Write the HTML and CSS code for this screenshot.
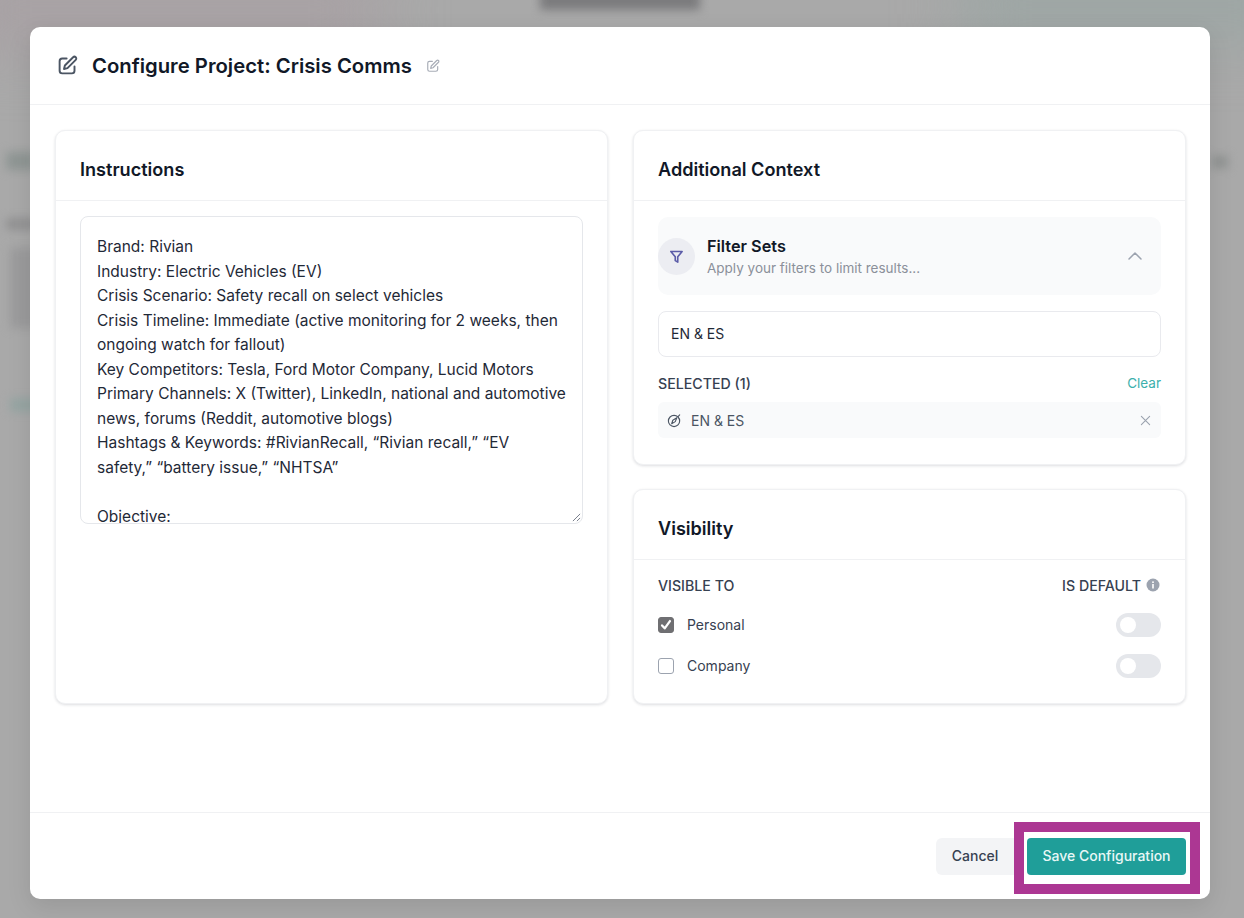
FILE: index.html
```html
<!DOCTYPE html>
<html lang="en">
<head>
<meta charset="utf-8">
<title>Configure Project</title>
<link rel="stylesheet" href="styles.css">
</head>
<body>
<div class="backdrop">
  <div class="blur blur-pink"></div>
  <div class="blur blur-teal"></div>
  <div class="blur blur-title"></div>
  <div class="blur blur-l1"></div>
  <div class="blur blur-l2"></div>
  <div class="blur blur-l3"></div>
  <div class="blur blur-l4"></div>
  <div class="blur blur-r1"></div>
</div>
<main class="modal">
  <header class="modal-head">
    <svg class="head-icon" viewBox="0 0 24 24" fill="none" stroke="currentColor" stroke-width="2.200" stroke-linecap="round" stroke-linejoin="round"><path d="M11 4H6a3 3 0 0 0-3 3v11a3 3 0 0 0 3 3h11a3 3 0 0 0 3-3v-5"/><path d="M18.400 2.600a2.100 2.100 0 0 1 3 3L12 15l-4 1 1-4z"/></svg>
    <h1 class="modal-title">Configure Project: Crisis Comms</h1>
    <svg class="title-edit" viewBox="0 0 24 24" fill="none" stroke="currentColor" stroke-width="2" stroke-linecap="round" stroke-linejoin="round"><path d="M11 4H6a3 3 0 0 0-3 3v11a3 3 0 0 0 3 3h11a3 3 0 0 0 3-3v-5"/><path d="M18.400 2.600a2.100 2.100 0 0 1 3 3L12 15l-4 1 1-4z"/></svg>
  </header>
  <div class="modal-body">
    <section class="card card-instructions">
      <h2 class="card-title">Instructions</h2>
      <div class="card-content">
        <div class="textarea">
          <p>Brand: Rivian</p>
          <p>Industry: Electric Vehicles (EV)</p>
          <p>Crisis Scenario: Safety recall on select vehicles</p>
          <p>Crisis Timeline: Immediate (active monitoring for 2 weeks, then ongoing watch for fallout)</p>
          <p>Key Competitors: Tesla, Ford Motor Company, Lucid Motors</p>
          <p>Primary Channels: X (Twitter), LinkedIn, national and automotive news, forums (Reddit, automotive blogs)</p>
          <p>Hashtags &amp; Keywords: #RivianRecall, “Rivian recall,” “EV<br>safety,” “battery issue,” “NHTSA”</p>
          <p class="blank">&nbsp;</p>
          <p>Objective:</p>
          <svg class="resize" viewBox="0 0 10 10" fill="none" stroke="#6b7280" stroke-width="1"><path d="M1 9 9 1M5.500 9 9 5.500"/></svg>
        </div>
      </div>
    </section>
    <div class="side">
      <section class="card">
        <h2 class="card-title">Additional Context</h2>
        <div class="card-content context">
          <div class="filter-head">
            <span class="filter-badge">
              <svg viewBox="0 0 24 24" fill="none" stroke="#5b5ca8" stroke-width="2.600" stroke-linecap="round" stroke-linejoin="round"><path d="M3 4h18l-7 8.500V21l-4-2.500v-6z"/></svg>
            </span>
            <div class="filter-text">
              <div class="filter-name">Filter Sets</div>
              <div class="filter-hint">Apply your filters to limit results...</div>
            </div>
            <svg class="chevron" viewBox="0 0 16 10" fill="none" stroke="#9ca3af" stroke-width="1.500" stroke-linecap="round" stroke-linejoin="round"><path d="M2 8l6-6 6 6"/></svg>
          </div>
          <div class="input">EN &amp; ES</div>
          <div class="selected-row">
            <span class="label">SELECTED (1)</span>
            <span class="clear">Clear</span>
          </div>
          <div class="chip">
            <svg class="chip-icon" viewBox="0 0 16 16" fill="none" stroke="#4b5563" stroke-width="1.200" stroke-linecap="round" stroke-linejoin="round"><circle cx="7.500" cy="8.500" r="6"/><path d="M5 11.500l1.200-3.800L10.500 5l-1.700 4.200z"/><path d="M12 3.500l1.500-1.500"/></svg>
            <span class="chip-text">EN &amp; ES</span>
            <svg class="chip-x" viewBox="0 0 12 12" fill="none" stroke="#9ca3af" stroke-width="1.200" stroke-linecap="round"><path d="M1.500 1.500l9 9M10.500 1.500l-9 9"/></svg>
          </div>
        </div>
      </section>
      <section class="card">
        <h2 class="card-title">Visibility</h2>
        <div class="card-content visibility">
          <div class="vis-head">
            <span class="label">VISIBLE TO</span>
            <span class="label default-label">IS DEFAULT
              <svg class="info" viewBox="0 0 14 14"><circle cx="7" cy="7" r="6.500" fill="#9ca3af"/><rect x="6.200" y="6" width="1.600" height="4.500" fill="#fff"/><rect x="6.200" y="3.400" width="1.600" height="1.600" fill="#fff"/></svg>
            </span>
          </div>
          <div class="vis-row">
            <span class="check checked"><svg viewBox="0 0 16 16" fill="none" stroke="#fff" stroke-width="2.600" stroke-linecap="round" stroke-linejoin="round"><path d="M3.500 8.500l3 3.300L12.500 3.500"/></svg></span>
            <span class="vis-name">Personal</span>
            <span class="toggle"><span class="knob"></span></span>
          </div>
          <div class="vis-row">
            <span class="check"></span>
            <span class="vis-name">Company</span>
            <span class="toggle"><span class="knob"></span></span>
          </div>
        </div>
      </section>
    </div>
  </div>
  <footer class="modal-foot">
    <button class="btn btn-cancel" type="button">Cancel</button>
    <span class="highlight"><button class="btn btn-save" type="button">Save Configuration</button></span>
  </footer>
</main>
</body>
</html>
```

FILE: styles.css
```css
*, *::before { box-sizing: border-box; }
html, body { margin: 0; height: 100%; }
body {
  width: 1244px;
  height: 918px;
  overflow: hidden;
  position: relative;
  background: #a9a9a9;
  font-family: Inter, "Liberation Sans", sans-serif;
  color: #111827;
  padding: 27px 34px 19px 30px;
}
.backdrop { position: absolute; inset: 0; overflow: hidden; }
.blur { position: absolute; filter: blur(9px); }
.blur-pink { left: -40px; top: -30px; width: 420px; height: 80px; background: #a8a1a4; filter: blur(30px); }
.blur-teal { left: 960px; top: -30px; width: 340px; height: 70px; background: #9ca6a4; filter: blur(30px); }
.blur-title { left: 540px; top: -10px; width: 160px; height: 20px; background: #7b7b7d; filter: blur(5px); }
.blur-l1 { left: 6px; top: 152px; width: 30px; height: 18px; background: #8f9694; filter: blur(5px); }
.blur-l2 { left: 6px; top: 218px; width: 30px; height: 12px; background: #929293; filter: blur(4px); }
.blur-l3 { left: 10px; top: 248px; width: 30px; height: 80px; background: #9b9b9c; filter: blur(5px); }
.blur-l4 { left: 10px; top: 398px; width: 30px; height: 14px; background: #96a5a3; filter: blur(4px); }
.blur-r1 { left: 1212px; top: 156px; width: 16px; height: 12px; background: #8f9291; filter: blur(5px); }

.modal {
  position: relative;
  width: 1180px;
  height: 872px;
  background: #fff;
  border-radius: 10px;
  display: flex;
  flex-direction: column;
  box-shadow: 0 8px 24px rgba(0,0,0,.1);
}
.modal-head {
  height: 78px;
  flex: none;
  display: flex;
  align-items: center;
  padding: 0 27px;
  border-bottom: 1px solid #f0f1f3;
}
.head-icon { width: 21px; height: 21px; color: #4b5563; flex: none; }
.modal-title {
  margin: 0 0 0 14px;
  font-size: 20.300px;
  line-height: 28px;
  font-weight: 600;
  color: #111827;
}
.title-edit { width: 14px; height: 14px; margin-left: 14px; color: #a8adb7; flex: none; }

.modal-body {
  flex: 1;
  display: grid;
  grid-template-columns: 553px 553px;
  column-gap: 25px;
  padding: 25px 24px 0 25px;
  align-items: start;
}
.card {
  background: #fff;
  border: 1px solid #f0f1f3;
  border-radius: 10px;
  box-shadow: 0 1px 3px rgba(17,24,39,.14);
}
.card-instructions { height: 574px; }
.side { display: flex; flex-direction: column; gap: 24px; }
.card-title {
  margin: 0;
  height: 70px;
  padding: 7px 24px 0;
  display: flex;
  align-items: center;
  font-size: 18.100px;
  font-weight: 600;
  color: #111827;
  border-bottom: 1px solid #f0f1f3;
}
.card-content { padding: 16px 24px; }

.textarea {
  position: relative;
  height: 308px;
  margin-top: -1px;
  border: 1px solid #e5e7eb;
  border-radius: 8px;
  padding: 18px 16px 0;
  overflow: hidden;
  font-size: 15.500px;
  line-height: 24.550px;
  color: #1f2937;
}
.textarea p { margin: 0; }
.resize { position: absolute; right: 1px; bottom: 1px; width: 9px; height: 9px; }

.context { padding-bottom: 26px; }
.filter-head {
  height: 78px;
  display: flex;
  align-items: center;
  background: #f9fafb;
  border-radius: 10px;
  padding-right: 18px;
}
.filter-badge {
  width: 37px;
  height: 37px;
  border-radius: 50%;
  background: #ecedf2;
  display: flex;
  align-items: center;
  justify-content: center;
  flex: none;
}
.filter-badge svg { width: 15px; height: 15px; }
.filter-text { flex: 1; margin-left: 12px; }
.filter-name { font-size: 16.300px; line-height: 22px; font-weight: 600; color: #111827; padding-top: 1px; }
.filter-hint { font-size: 13.500px; line-height: 22px; color: #8b909a; }
.chevron { width: 16px; height: 10px; }
.input {
  margin-top: 16px;
  height: 46px;
  border: 1px solid #e9eaee;
  border-radius: 8px;
  display: flex;
  align-items: center;
  padding: 0 12px 1px;
  font-size: 14px;
  color: #1f2937;
}
.selected-row {
  margin-top: 16px;
  height: 20px;
  display: flex;
  justify-content: space-between;
  align-items: center;
}
.label { font-size: 14.200px; font-weight: 500; color: #374151; }
.clear { font-size: 13.500px; color: #3cb0ac; }
.chip {
  margin-top: 9px;
  height: 36px;
  background: #f9fafb;
  border-radius: 6px;
  display: flex;
  align-items: center;
  padding: 0 10px 0 9px;
  font-size: 14px;
  color: #4b5563;
}
.chip-icon { width: 15px; height: 15px; flex: none; }
.chip-text { flex: 1; margin-left: 9px; }
.chip-x { width: 11px; height: 11px; }

.visibility { padding: 15px 24px 25px; }
.vis-head {
  height: 20px;
  display: flex;
  justify-content: space-between;
  align-items: center;
}
.default-label { display: flex; align-items: center; gap: 5px; }
.info { width: 14px; height: 14px; margin-right: 1px; }
.vis-row {
  display: flex;
  align-items: center;
  height: 24px;
  margin-top: 17px;
}
.vis-head + .vis-row { margin-top: 18px; }
.check {
  width: 16px;
  height: 16px;
  border: 1px solid #9ca3af;
  border-radius: 3px;
  flex: none;
  display: block;
}
.checked { background: #6f6f72; border-color: #6f6f72; }
.checked svg { display: block; width: 14px; height: 14px; }
.vis-name { flex: 1; margin-left: 13px; padding-bottom: 1px; font-size: 14px; color: #374151; }
.toggle {
  width: 45px;
  height: 24px;
  background: #e5e7eb;
  border-radius: 12px;
  padding: 4px;
  flex: none;
}
.knob { display: block; width: 16px; height: 16px; border-radius: 50%; background: #fff; }

.modal-foot {
  height: 87px;
  flex: none;
  border-top: 1px solid #f0f1f3;
  display: flex;
  justify-content: flex-end;
  align-items: center;
  padding: 0 24px 0 0;
}
.btn {
  font-family: inherit;
  font-size: 14px;
  font-weight: 500;
  height: 37px;
  border: 0;
  border-radius: 4px;
  padding: 0 0 1px;
}
.btn-cancel { width: 78px; margin-right: 13px; background: #f3f4f6; color: #374151; border-radius: 6px 0 0 6px; }
.highlight {
  position: relative;
  display: block;
}
.btn-save { display: block; width: 159px; background: #1f9e99; color: #e8f7f6; }
.highlight::before {
  content: "";
  position: absolute;
  left: -13px;
  top: -16px;
  width: 186px;
  height: 72px;
  border: 10px solid #ac3793;
  pointer-events: none;
}
```
